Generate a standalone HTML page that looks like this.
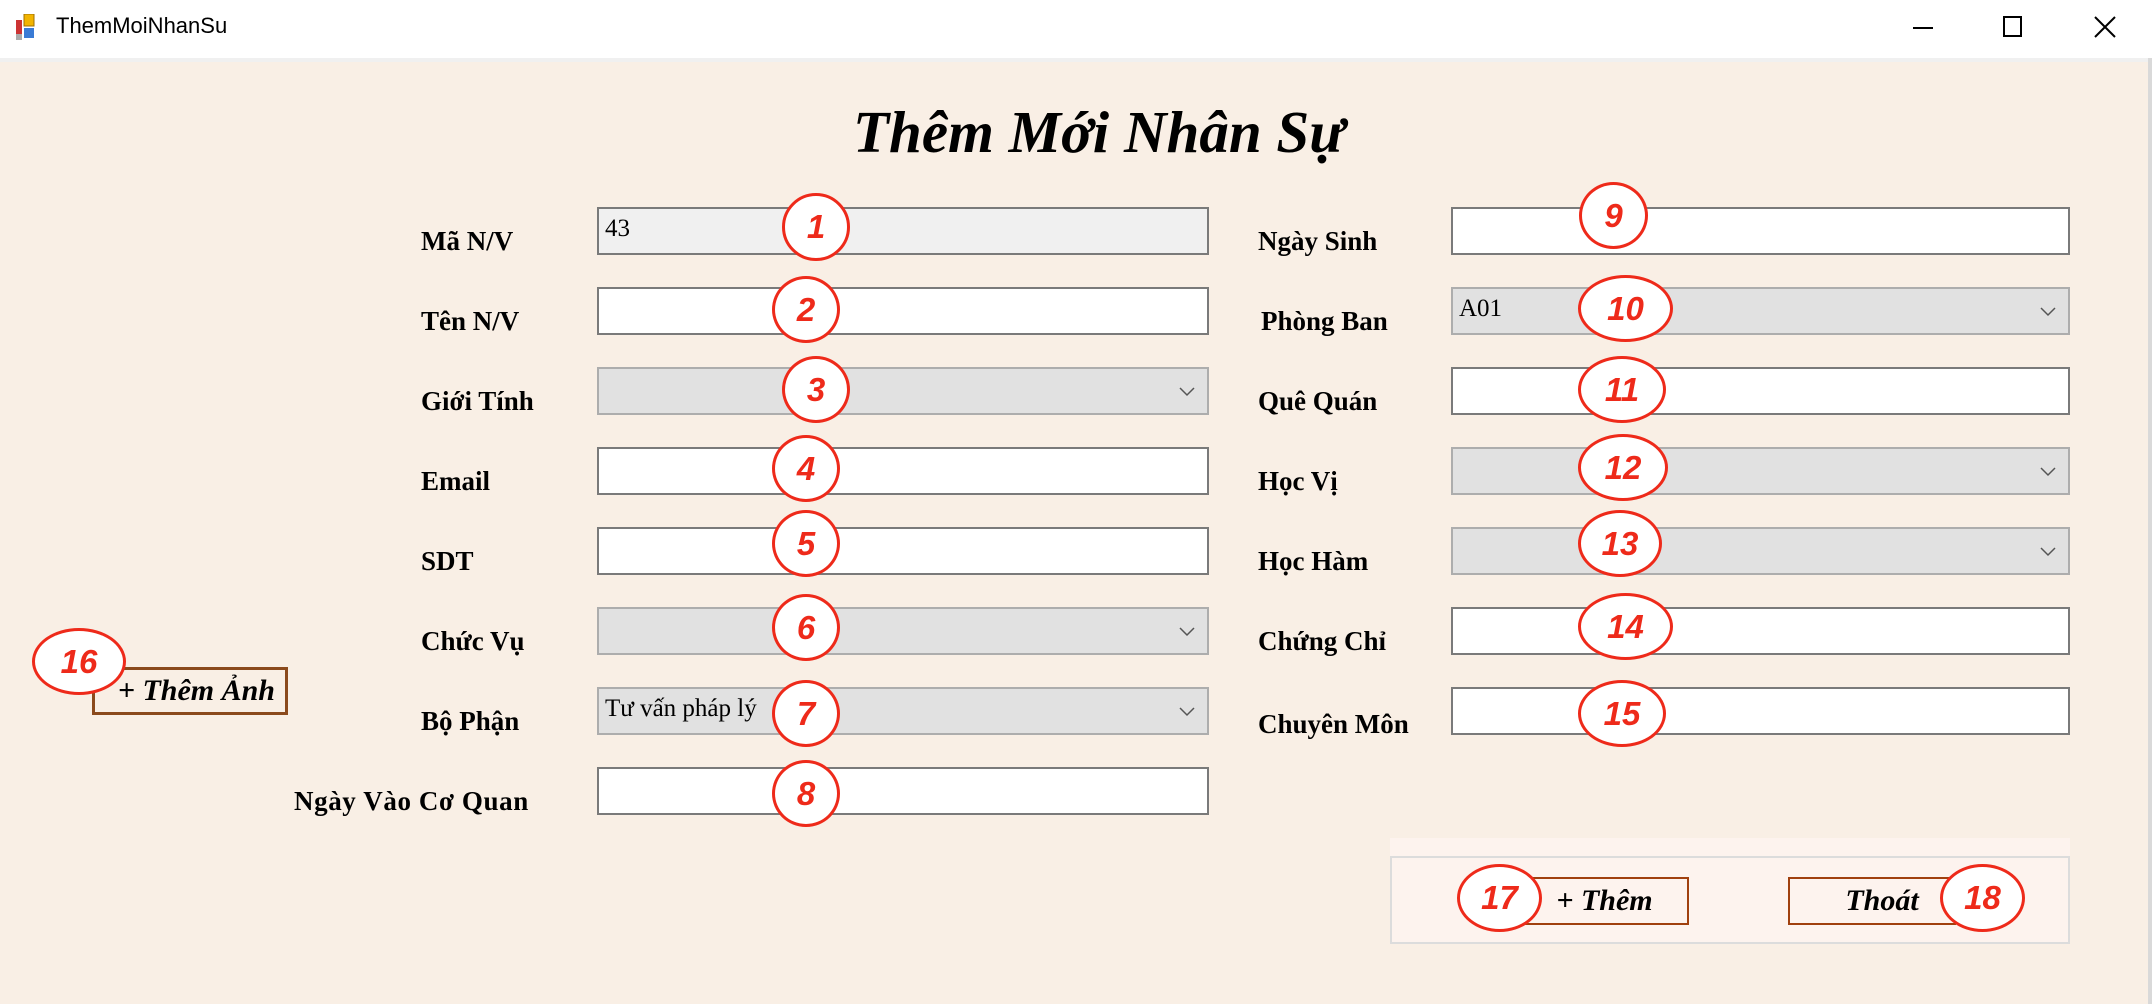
<!DOCTYPE html>
<html><head><meta charset="utf-8"><style>
*{margin:0;padding:0;box-sizing:border-box}
body{width:2152px;height:1004px;overflow:hidden;background:#fff;position:relative;font-family:"Liberation Serif",serif}
.abs{position:absolute}
.tb{top:0;left:0;width:2152px;height:58px;background:#fff}
.content{top:58px;left:0;width:2148px;height:946px;background:#f9efe5;border-top:4px solid #f0f0f0}
.rb{top:58px;left:2148px;width:4px;height:946px;background:#d9d9d9}
.lbl{font-weight:bold;font-size:27px;color:#000;white-space:nowrap}
.in{background:#fff;border:2px solid #7a7a7a}
.cb{background:#e1e1e1;border:2px solid #adadad}
.cb svg{position:absolute;right:12px;top:18px}
.val{font-size:25px;position:absolute;left:6px;top:6px;white-space:nowrap}
.c{background:#fff;border:3px solid #ee2a1a;border-radius:50%;color:#ee2a1a;font:italic bold 33px "Liberation Sans",sans-serif;display:flex;align-items:center;justify-content:center}
.btn{border:2px solid #a0400e;font:italic bold 28px "Liberation Serif",serif;display:flex;align-items:center;justify-content:center}
</style></head><body>
<div class="abs tb">
  <svg class="abs" style="left:16px;top:14px" width="22" height="26" viewBox="0 0 22 26"><rect x="0" y="6" width="6" height="14" fill="#c33"/><rect x="8" y="0" width="10" height="12" fill="#f2b400" stroke="#a07000"/><rect x="8" y="14" width="10" height="10" fill="#3a7bd5"/><rect x="0" y="20" width="6" height="6" fill="#aaa"/></svg>
  <div class="abs" style="left:56px;top:13px;font:22px 'Liberation Sans',sans-serif;color:#000">ThemMoiNhanSu</div>
  <div class="abs" style="left:1913px;top:27px;width:20px;height:2px;background:#000"></div>
  <div class="abs" style="left:2003px;top:16px;width:19px;height:21px;border:2px solid #000"></div>
  <svg class="abs" style="left:2093px;top:15px" width="24" height="24"><path d="M2 2L22 22M22 2L2 22" stroke="#000" stroke-width="2"/></svg>
</div>
<div class="abs content"></div>
<div class="abs rb"></div>

<div class="abs" style="left:853px;top:98px;font:italic bold 59px 'Liberation Serif',serif;white-space:nowrap">Thêm Mới Nhân Sự</div>

<div class="abs lbl" style="left:421px;top:226px">Mã N/V</div>
<div class="abs lbl" style="left:421px;top:306px">Tên N/V</div>
<div class="abs lbl" style="left:421px;top:386px">Giới Tính</div>
<div class="abs lbl" style="left:421px;top:466px">Email</div>
<div class="abs lbl" style="left:421px;top:546px">SDT</div>
<div class="abs lbl" style="left:421px;top:626px">Chức Vụ</div>
<div class="abs lbl" style="left:421px;top:706px">Bộ Phận</div>
<div class="abs lbl" style="left:294px;top:786px;letter-spacing:0.6px">Ngày Vào Cơ Quan</div>

<div class="abs in" style="left:597px;top:207px;width:612px;height:48px;background:#f0f0f0"><span class="val">43</span></div>
<div class="abs in" style="left:597px;top:287px;width:612px;height:48px"></div>
<div class="abs cb" style="left:597px;top:367px;width:612px;height:48px"><svg width="16" height="10"><path d="M1 1L8 8L15 1" stroke="#555" fill="none" stroke-width="1.5"/></svg></div>
<div class="abs in" style="left:597px;top:447px;width:612px;height:48px"></div>
<div class="abs in" style="left:597px;top:527px;width:612px;height:48px"></div>
<div class="abs cb" style="left:597px;top:607px;width:612px;height:48px"><svg width="16" height="10"><path d="M1 1L8 8L15 1" stroke="#555" fill="none" stroke-width="1.5"/></svg></div>
<div class="abs cb" style="left:597px;top:687px;width:612px;height:48px"><span class="val">Tư vấn pháp lý</span><svg width="16" height="10"><path d="M1 1L8 8L15 1" stroke="#555" fill="none" stroke-width="1.5"/></svg></div>
<div class="abs in" style="left:597px;top:767px;width:612px;height:48px"></div>

<div class="abs lbl" style="left:1258px;top:226px">Ngày Sinh</div>
<div class="abs lbl" style="left:1261px;top:306px">Phòng Ban</div>
<div class="abs lbl" style="left:1258px;top:386px">Quê Quán</div>
<div class="abs lbl" style="left:1258px;top:466px">Học Vị</div>
<div class="abs lbl" style="left:1258px;top:546px">Học Hàm</div>
<div class="abs lbl" style="left:1258px;top:626px">Chứng Chỉ</div>
<div class="abs lbl" style="left:1258px;top:709px">Chuyên Môn</div>

<div class="abs in" style="left:1451px;top:207px;width:619px;height:48px"></div>
<div class="abs cb" style="left:1451px;top:287px;width:619px;height:48px"><span class="val">A01</span><svg width="16" height="10"><path d="M1 1L8 8L15 1" stroke="#555" fill="none" stroke-width="1.5"/></svg></div>
<div class="abs in" style="left:1451px;top:367px;width:619px;height:48px"></div>
<div class="abs cb" style="left:1451px;top:447px;width:619px;height:48px"><svg width="16" height="10"><path d="M1 1L8 8L15 1" stroke="#555" fill="none" stroke-width="1.5"/></svg></div>
<div class="abs cb" style="left:1451px;top:527px;width:619px;height:48px"><svg width="16" height="10"><path d="M1 1L8 8L15 1" stroke="#555" fill="none" stroke-width="1.5"/></svg></div>
<div class="abs in" style="left:1451px;top:607px;width:619px;height:48px"></div>
<div class="abs in" style="left:1451px;top:687px;width:619px;height:48px"></div>

<div class="abs btn" style="left:92px;top:667px;width:196px;height:48px;border:3px solid #8b4a1c;justify-content:flex-end;padding-right:10px;font-size:30px">+ Thêm Ảnh</div>

<div class="abs" style="left:1390px;top:838px;width:680px;height:18px;background:#fdf3ee"></div>
<div class="abs" style="left:1390px;top:856px;width:680px;height:88px;background:#fdf3ee;border:2px solid #dcdcdc"></div>
<div class="abs btn" style="left:1520px;top:877px;width:169px;height:48px;padding-left:0px;font-size:30px">+ Thêm</div>
<div class="abs btn" style="left:1788px;top:877px;width:168px;height:48px;padding-left:20px;font-size:30px">Thoát</div>

<div class="abs c" style="left:782px;top:193px;width:68px;height:68px">1</div>
<div class="abs c" style="left:772px;top:276px;width:68px;height:67px">2</div>
<div class="abs c" style="left:782px;top:356px;width:68px;height:67px">3</div>
<div class="abs c" style="left:772px;top:435px;width:68px;height:67px">4</div>
<div class="abs c" style="left:772px;top:510px;width:68px;height:67px">5</div>
<div class="abs c" style="left:772px;top:594px;width:68px;height:67px">6</div>
<div class="abs c" style="left:772px;top:680px;width:68px;height:67px">7</div>
<div class="abs c" style="left:772px;top:760px;width:68px;height:67px">8</div>
<div class="abs c" style="left:1579px;top:182px;width:69px;height:67px">9</div>
<div class="abs c" style="left:1578px;top:275px;width:95px;height:67px">10</div>
<div class="abs c" style="left:1578px;top:356px;width:88px;height:67px">11</div>
<div class="abs c" style="left:1578px;top:434px;width:90px;height:67px">12</div>
<div class="abs c" style="left:1578px;top:510px;width:84px;height:67px">13</div>
<div class="abs c" style="left:1578px;top:593px;width:95px;height:67px">14</div>
<div class="abs c" style="left:1578px;top:680px;width:88px;height:67px">15</div>
<div class="abs c" style="left:32px;top:628px;width:94px;height:67px">16</div>
<div class="abs c" style="left:1457px;top:864px;width:85px;height:68px">17</div>
<div class="abs c" style="left:1940px;top:864px;width:85px;height:68px">18</div>
</body></html>
